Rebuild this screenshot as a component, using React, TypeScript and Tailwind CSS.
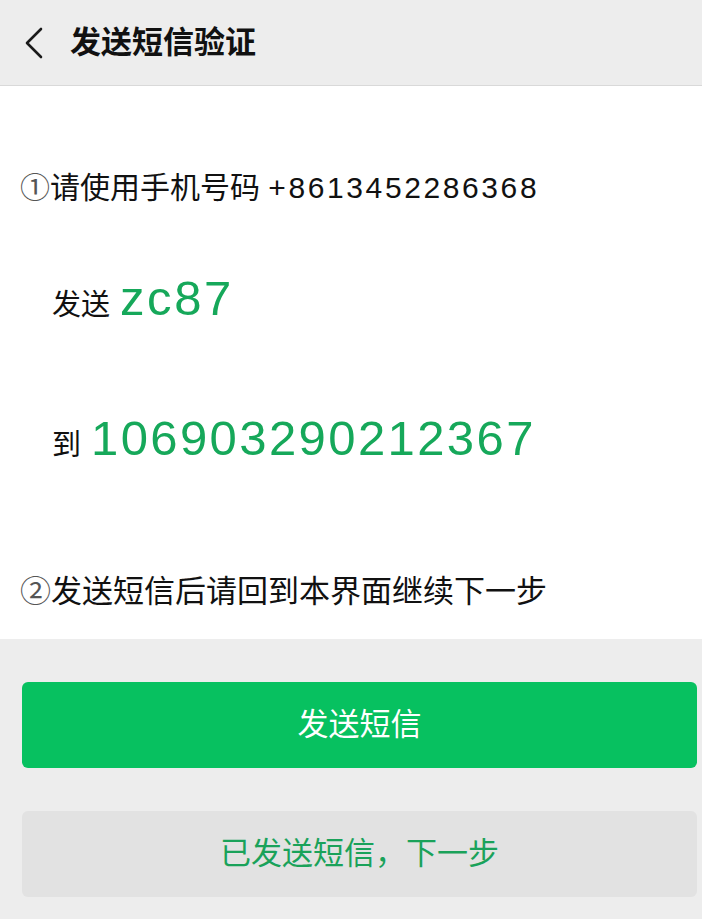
import React from "react";

const font = { fontFamily: '"Liberation Sans", "Noto Sans CJK SC", sans-serif' };

function BackIcon() {
  return (
    <svg width="20" height="32" viewBox="0 0 20 32" fill="none">
      <path d="M17 2 L3 16 L17 30" stroke="#1a1a1a" strokeWidth="2.6" strokeLinecap="round" strokeLinejoin="round" />
    </svg>
  );
}

export default function App() {
  return (
    <div className="w-[702px] h-[919px] bg-[#ededed] overflow-hidden" style={font}>
      {/* Header */}
      <div className="h-[86px] flex items-center bg-[#ededed] border-b border-[#d9d9d9]">
        <div className="pl-[24px] w-[70px] flex items-center">
          <BackIcon />
        </div>
        <h1 className="text-[31px] font-bold text-[#111] leading-none">发送短信验证</h1>
      </div>

      {/* Content */}
      <div className="bg-white h-[553px] flex flex-col">
        <p className="mt-[82px] pl-[20px] text-[30px] leading-[40px] text-[#111]">
          <span className="text-[#555]">①</span>请使用手机号码 <span className="tracking-[2.6px]">+8613452286368</span>
        </p>

        <div className="mt-[54px] pl-[52px] flex items-baseline h-[60px]">
          <span className="text-[29px] text-[#111]">发送</span>
          <span className="ml-[10px] text-[49px] tracking-[2.6px] text-[#16a85a]">zc87</span>
        </div>

        <div className="mt-[80px] pl-[52px] flex items-baseline h-[60px]">
          <span className="text-[29px] text-[#111]">到</span>
          <span className="ml-[10px] text-[49px] tracking-[2.4px] text-[#16a85a]">106903290212367</span>
        </div>

        <p className="mt-[110px] pl-[20px] text-[31px] leading-[40px] text-[#111]">
          <span className="text-[#555]">②</span>发送短信后请回到本界面继续下一步
        </p>
      </div>

      {/* Actions */}
      <div className="pl-[22px] pr-[5px] pt-[43px] flex flex-col gap-[43px]">
        <button className="h-[86px] w-full rounded-[6px] bg-[#07c160] text-white text-[31px]">
          发送短信
        </button>
        <button className="h-[86px] w-full rounded-[6px] bg-[#e2e2e2] text-[#1aa25a] text-[31px]">
          已发送短信，下一步
        </button>
      </div>
    </div>
  );
}
